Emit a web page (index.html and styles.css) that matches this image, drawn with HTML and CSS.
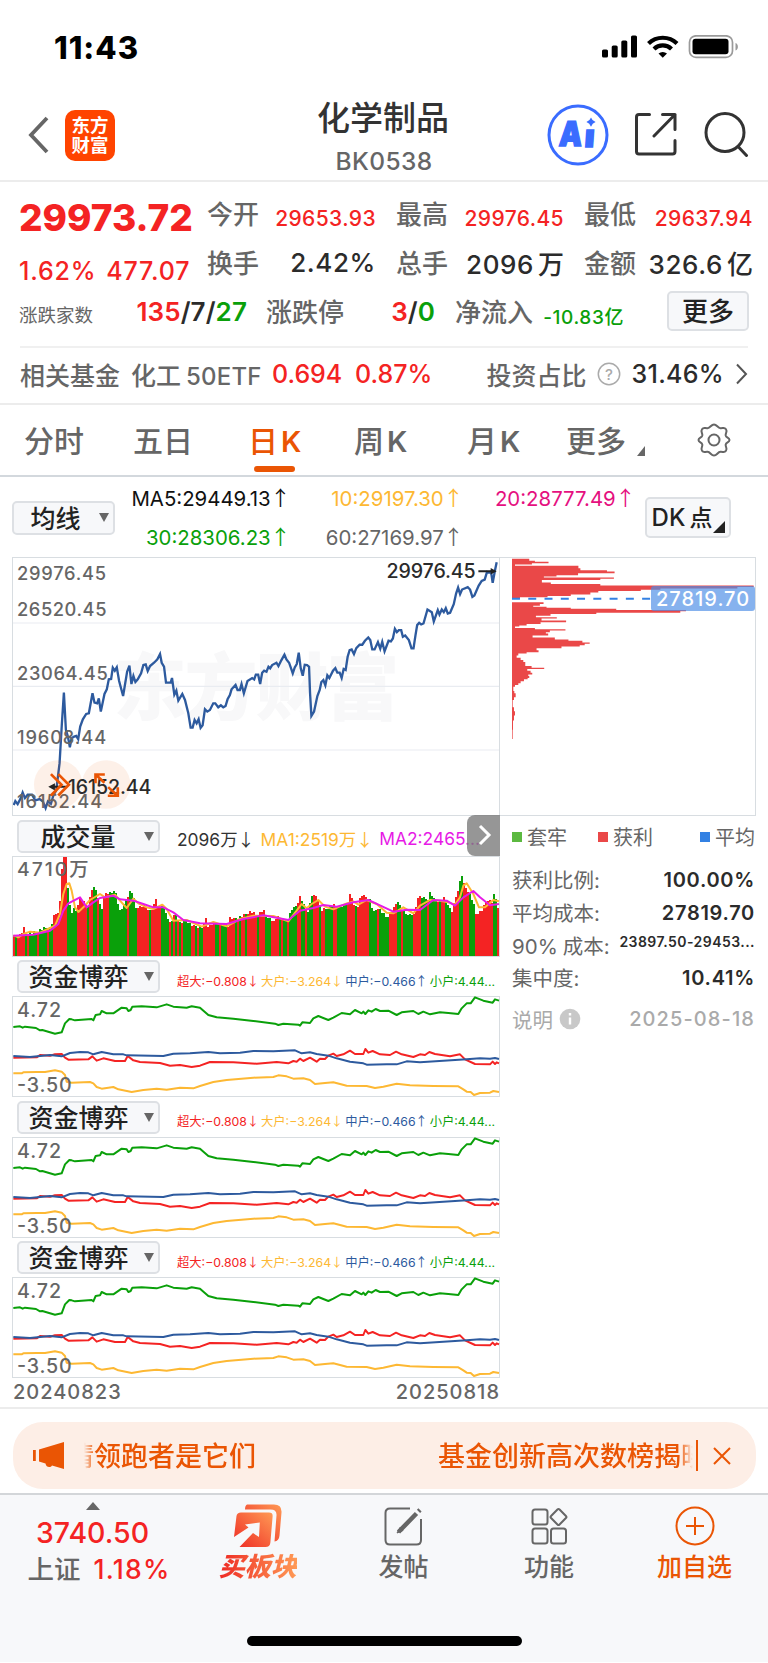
FILE: index.html
```html
<!DOCTYPE html>
<html lang="zh-CN">
<head>
    <meta charset="UTF-8">
    <meta name="viewport" content="width=device-width, initial-scale=1.0">
    <title>化学制品 BK0538</title>
    <link rel="stylesheet" href="styles.css">
</head>
<body>
    <div class="status-bar">
        <span class="clock">11:43</span>
        <svg class="status-icons" width="138" height="24" viewBox="0 0 138 24">
            <rect x="0" y="14.5" width="6" height="8" rx="1.6"/>
            <rect x="9.7" y="10.5" width="6" height="12" rx="1.6"/>
            <rect x="19.3" y="5.5" width="6" height="17" rx="1.6"/>
            <rect x="29" y="0.5" width="6" height="22" rx="1.6"/>
            <g fill="none" stroke="#000" stroke-width="4.2">
                <path d="M46.5 8.5a20.5 20.5 0 0 1 28.5 0"/>
                <path d="M52 14a12.5 12.5 0 0 1 17.5 0"/>
            </g>
            <path d="M56.5 18.5a6.5 6.5 0 0 1 8.5 0l-4.25 4.2z"/>
            <rect x="87.5" y="0.8" width="43" height="21.6" rx="6.5" fill="none" stroke="#9a9a9a" stroke-width="1.7"/>
            <rect x="90.5" y="3.8" width="36" height="15.5" rx="3"/>
            <path d="M133.5 8c3.2 1 3.2 6.5 0 7.5z" fill="#9a9a9a"/>
        </svg>
    </div>

    <header class="header">
        <div class="header-left">
            <svg width="22" height="38" viewBox="0 0 22 38"><path d="M19 2 3 19l16 17" fill="none" stroke="#666" stroke-width="3.8"/></svg>
            <div class="logo">东方<br>财富</div>
        </div>
        <div class="title">
            <h1>化学制品</h1>
            <p>BK0538</p>
        </div>
        <div class="header-right">
            <svg class="ai" width="62" height="62" viewBox="0 0 62 62">
                <circle cx="31" cy="31" r="29" fill="none" stroke="#3a6cff" stroke-width="3"/>
                <g transform="skewX(-4)" fill="#3a6cff" stroke="#3a6cff" stroke-width="1.5">
                    <text x="14.5" y="42" font-size="34" textLength="23" lengthAdjust="spacingAndGlyphs">A</text>
                    <text x="40" y="43" font-size="31" textLength="10" lengthAdjust="spacingAndGlyphs">ı</text>
                </g>
                <path d="M44 13.5q1.2 3.4 4.6 4.6-3.4 1.2-4.6 4.6-1.2-3.4-4.6-4.6 3.4-1.2 4.6-4.6z" fill="#3a6cff"/>
            </svg>
            <svg class="share" width="44" height="46" viewBox="0 0 44 46" fill="none" stroke="#333" stroke-width="3" stroke-linecap="round" stroke-linejoin="round">
                <path d="M16.5 3.5H6Q3.5 3.5 3.5 6v34.5Q3.5 43 6 43h33.5q2.5 0 2.5-2.5V29.5"/>
                <path d="M29.5 3.5H42v15M42 3.5 21 25"/>
            </svg>
            <svg class="search" width="46" height="46" viewBox="0 0 46 46" fill="none" stroke="#333" stroke-width="3" stroke-linecap="round">
                <circle cx="22" cy="21.5" r="19"/>
                <path d="m35.5 36 8 8.5"/>
            </svg>
        </div>
    </header>

    <section class="quote">
        <div class="quote-top">
            <div class="price-box">
                <div class="price">29973.72</div>
                <div class="change"><span>1.62%</span><span>477.07</span></div>
            </div>
            <div class="stats">
                <div class="stat"><label>今开</label><span class="red small">29653.93</span></div>
                <div class="stat"><label>最高</label><span class="red small">29976.45</span></div>
                <div class="stat"><label>最低</label><span class="red small">29637.94</span></div>
                <div class="stat"><label>换手</label><span>2.42%</span></div>
                <div class="stat"><label>总手</label><span>2096<i>万</i></span></div>
                <div class="stat"><label>金额</label><span>326.6<i>亿</i></span></div>
            </div>
        </div>
        <div class="quote-more">
            <div class="stat updown"><label>涨跌家数</label><span><b class="red">135</b>/7/<b class="green">27</b></span></div>
            <div class="stat limit"><label>涨跌停</label><span><b class="red">3</b>/<b class="green">0</b></span></div>
            <div class="stat inflow"><label>净流入</label><span class="green">-10.83亿</span></div>
            <button class="more">更多</button>
        </div>
        <div class="fund">
            <span class="fund-label">相关基金</span>
            <span class="fund-name">化工<i>50ETF</i></span>
            <span class="red fund-price">0.694</span>
            <span class="red fund-pct">0.87%</span>
            <span class="ratio-label">投资占比</span>
            <svg class="help" width="24" height="24" viewBox="0 0 24 24"><circle cx="12" cy="12" r="10.7" fill="none" stroke="#aaa" stroke-width="1.5"/><text x="12" y="17.5" font-size="15" text-anchor="middle" fill="#aaa">?</text></svg>
            <span class="ratio">31.46%</span>
            <svg class="arrow" width="13" height="22" viewBox="0 0 13 22"><path d="m2 1.5 9 9.5-9 9.5" fill="none" stroke="#555" stroke-width="2"/></svg>
        </div>
    </section>

    <nav class="tabs">
        <span class="tab">分时</span>
        <span class="tab">五日</span>
        <span class="tab active">日<i>K</i></span>
        <span class="tab">周<i>K</i></span>
        <span class="tab">月<i>K</i></span>
        <span class="tab"><span class="has-more">更多</span></span>
        <svg class="gear" width="36" height="36" viewBox="0 0 36 36" fill="none" stroke="#666" stroke-width="2">
            <circle cx="18" cy="18" r="5.5"/>
            <path d="M18 2.5c3 0 3.5 3.5 6.5 3.7 2.5.2 4-1.2 5.5 1 1.7 2.5-.8 3.8-.3 6.3.5 2.2 3.8 2 3.8 4.5s-3.3 2.3-3.8 4.5c-.5 2.5 2 3.8.3 6.3-1.5 2.2-3 .8-5.5 1-3 .2-3.5 3.7-6.5 3.7s-3.5-3.5-6.5-3.7c-2.5-.2-4 1.2-5.5-1-1.7-2.5.8-3.8.3-6.3C5.8 20.3 2.5 20.5 2.5 18s3.3-2.3 3.8-4.5C6.8 11 4.3 9.7 6 7.2c1.5-2.2 3-.8 5.5-1C14.5 6 15 2.5 18 2.5z"/>
        </svg>
    </nav>

    <div class="ma-row">
        <button class="select ma-select">均线</button>
        <div class="ma-values">
            <span class="c-black">MA5:29449.13<i class="ar">↑</i></span>
            <span class="c-yellow">10:29197.30<i class="ar">↑</i></span>
            <span class="c-pink">20:28777.49<i class="ar">↑</i></span>
            <span class="c-green">30:28306.23<i class="ar">↑</i></span>
            <span class="c-gray">60:27169.97<i class="ar">↑</i></span>
        </div>
        <button class="dk">DK<i>点</i></button>
    </div>

    <div class="main-chart">
        <svg class="price-chart" width="487" height="258" viewBox="38 24 1461 774">
            <text class="watermark" x="340" y="492" textLength="860">东方财富</text>
            <path d="M38 218.5H1499M38 409H1499M38 600.5H1499" stroke="#e9ecf1" stroke-width="3.5"/>
            <polyline class="price-line" points="40,766 45,754 52,763 60,748 67,728 74,745 82,735 95,735 105,752 118,748 128,755 136,775 143,755 152,762 160,735 168,722 178,640 185,520 191,428 197,540 203,560 209,592 214,565 222,560 228,558 234,568 240,530 248,508 258,492 266,490 277,430 283,458 291,460 296,445 302,485 313,432 320,418 326,388 333,387 338,353 344,362 350,352 357,393 369,438 381,365 388,347 394,402 400,378 406,396 413,388 423,370 430,345 437,343 443,363 450,348 462,338 472,328 480,312 485,338 492,350 498,398 512,398 516,384 523,434 529,422 535,452 547,432 555,450 565,490 572,533 578,533 584,510 590,520 596,508 602,534 608,526 615,478 622,485 630,480 640,460 646,460 655,472 663,466 670,472 677,468 683,448 690,435 695,418 707,405 713,420 720,420 725,402 732,430 743,393 757,384 763,388 768,374 775,374 781,402 787,368 793,362 800,365 806,350 811,355 817,345 830,338 836,348 845,330 854,314 860,328 868,338 879,370 885,352 891,342 897,308 903,355 909,377 915,344 922,345 928,350 931,430 935,498 943,485 953,438 960,420 965,396 971,390 977,406 983,376 989,384 1000,362 1007,354 1013,368 1020,368 1026,384 1032,357 1038,360 1044,320 1050,300 1056,298 1063,312 1070,294 1080,284 1088,284 1096,272 1106,262 1112,270 1118,298 1125,298 1135,276 1142,296 1148,275 1155,304 1167,272 1174,274 1180,265 1186,236 1192,246 1198,240 1205,240 1210,260 1217,256 1228,270 1236,295 1242,295 1248,255 1253,225 1259,218 1265,223 1272,220 1284,178 1297,186 1303,214 1315,180 1320,193 1327,178 1333,186 1339,174 1345,190 1352,188 1363,162 1370,130 1376,112 1382,132 1388,118 1405,111 1412,118 1419,140 1425,136 1438,106 1447,92 1456,88 1463,65 1470,67 1475,64 1480,98 1487,60 1492,36"/>
            <g class="axis-text">
                <text x="50" y="90" textLength="268">29976.45</text>
                <text x="50" y="197" textLength="269">26520.45</text>
                <text x="50" y="389" textLength="273">23064.45</text>
                <text x="50" y="581" textLength="268">19608.44</text>
                <text x="50" y="774" textLength="256">16152.44</text>
            </g>
            <circle cx="174" cy="704" r="73" fill="#ea5504" fill-opacity=".09"/>
            <circle cx="318" cy="704" r="73" fill="#ea5504" fill-opacity=".09"/>
            <g class="mark-text">
                <text x="1161" y="84" textLength="268">29976.45</text>
                <text x="203" y="732" textLength="251">16152.44</text>
            </g>
            <path d="M1437 63h45M160 711h40" stroke="#222" stroke-width="6"/>
            <path d="m1492 63-18-10v20zM144 711l20-11v22z" fill="#222"/>
            <g fill="none" stroke="#ea5504" stroke-width="8">
                <path d="m152 673 32 32-32 32M174 673l32 32-32 32"/>
                <path d="M286 700v-26h28M287 675l26 24M353 712v26h-30M352 737l-28-25"/>
            </g>
        </svg>
        <svg id="chips" class="chip-chart" width="244" height="258" viewBox="36 24 732 774"></svg>
        <span class="avg-tag">27819.70</span>
    </div>

    <div class="board">
        <div class="charts">
            <div class="sub-head volume-head">
                <button class="select wide">成交量</button>
                <span class="c-dark">2096万<i class="ar">↓</i></span>
                <span class="c-yellow">MA1:2519万<i class="ar">↓</i></span>
                <span class="c-magenta">MA2:2465...</span>
                <div class="slide"><svg width="14" height="22" viewBox="0 0 14 22"><path d="m2 2 9 9-9 9" fill="none" stroke="#fff" stroke-width="3"/></svg></div>
            </div>
            <svg id="volume" class="sub-chart" width="488" height="101" viewBox="36 136 1464 303"></svg>

            <div class="sub-head">
                <button class="select wide">资金博弈</button>
                <div class="flows">
                    <span class="red">超大:−0.808<i class="ar">↓</i></span>
                    <span class="c-yellow">大户:−3.264<i class="ar">↓</i></span>
                    <span class="c-blue">中户:−0.466<i class="ar">↑</i></span>
                    <span class="green">小户:4.44...</span>
                </div>
            </div>
            <svg class="sub-chart" width="488" height="101" viewBox="36 123 1464 303">
                <g id="flow">
                    <rect x="37.5" y="124.5" width="1461" height="300" fill="none" stroke="#d8dde1" stroke-width="3"/>
                    <g class="flow-line">
                        <polyline stroke="#fdb833" points="40,355 65,355 70,352 110,351 135,351 165,346 185,350 195,360 200,380 215,383 270,381 280,385 290,396 305,401 340,396 355,403 395,411 430,405 470,401 500,404 540,398 580,400 600,393 640,381 680,375 760,368 820,366 835,361 860,364 880,371 910,370 930,375 945,387 975,384 1000,382 1040,392 1100,393 1125,399 1150,395 1190,386 1230,391 1300,393 1375,394 1390,403 1400,410 1412,411 1422,420 1440,414 1470,413 1480,408 1497,411"/>
                        <polyline stroke="#f42323" points="40,308 110,307 120,300 150,302 165,298 185,297 195,308 205,314 265,313 277,304 290,317 310,310 345,318 375,318 383,303 400,316 420,321 480,324 510,332 540,330 575,336 600,332 630,321 700,322 770,326 830,321 865,325 880,318 890,320 900,311 910,318 930,308 950,320 960,311 975,312 985,302 1000,296 1010,303 1030,298 1050,287 1065,297 1090,297 1096,282 1105,293 1118,288 1140,298 1170,300 1188,290 1205,298 1240,306 1260,298 1275,300 1288,291 1305,297 1350,304 1380,298 1395,313 1425,327 1470,328 1478,320 1485,327 1490,322 1497,325"/>
                        <polyline stroke="#2d5a9e" points="40,303 90,306 120,303 150,300 185,304 210,294 240,291 265,292 280,298 305,291 340,298 370,298 380,301 490,303 520,296 570,295 625,291 660,295 720,293 760,288 820,289 885,286 905,295 930,292 950,297 985,302 1010,310 1050,320 1090,325 1100,329 1160,328 1190,328 1220,319 1260,322 1330,317 1400,313 1440,310 1470,311 1485,309 1497,312"/>
                        <polyline stroke="#0aa00a" points="40,216 60,214 68,218 75,215 108,219 120,226 127,225 165,236 185,232 195,205 208,192 215,193 225,196 275,192 280,196 287,180 300,178 305,168 320,175 340,175 365,158 380,160 385,168 392,165 397,155 425,154 470,157 500,148 520,155 560,158 575,154 600,158 625,180 650,187 700,191 760,198 825,206 835,210 850,206 895,209 900,212 907,202 930,204 940,190 955,183 985,195 1000,188 1025,174 1050,178 1065,165 1085,175 1090,170 1096,177 1105,166 1115,170 1127,162 1140,168 1165,167 1190,180 1205,172 1240,168 1255,177 1270,170 1290,178 1320,172 1345,174 1375,177 1385,160 1400,145 1412,145 1425,127 1450,137 1478,143 1485,133 1497,137"/>
                    </g>
                    <g class="flow-text">
                        <text x="51" y="185" textLength="132">4.72</text>
                        <text x="51" y="410" textLength="164">-3.50</text>
                    </g>
                </g>
            </svg>

            <div class="sub-head">
                <button class="select wide">资金博弈</button>
                <div class="flows">
                    <span class="red">超大:−0.808<i class="ar">↓</i></span>
                    <span class="c-yellow">大户:−3.264<i class="ar">↓</i></span>
                    <span class="c-blue">中户:−0.466<i class="ar">↑</i></span>
                    <span class="green">小户:4.44...</span>
                </div>
            </div>
            <svg class="sub-chart" width="488" height="101" viewBox="36 123 1464 303"><use href="#flow"/></svg>

            <div class="sub-head">
                <button class="select wide">资金博弈</button>
                <div class="flows">
                    <span class="red">超大:−0.808<i class="ar">↓</i></span>
                    <span class="c-yellow">大户:−3.264<i class="ar">↓</i></span>
                    <span class="c-blue">中户:−0.466<i class="ar">↑</i></span>
                    <span class="green">小户:4.44...</span>
                </div>
            </div>
            <svg class="sub-chart" width="488" height="101" viewBox="36 123 1464 303"><use href="#flow"/></svg>

            <div class="dates"><span>20240823</span><span>20250818</span></div>
        </div>

        <aside class="chip-info">
            <div class="legend">
                <span class="lg-green">套牢</span>
                <span class="lg-red">获利</span>
                <span class="lg-blue">平均</span>
            </div>
            <div class="info-row"><label>获利比例:</label><b>100.00%</b></div>
            <div class="info-row"><label>平均成本:</label><b>27819.70</b></div>
            <div class="info-row"><label>90%<i>成本:</i></label><b class="range">23897.50-29453...</b></div>
            <div class="info-row"><label>集中度:</label><b>10.41%</b></div>
            <div class="info-row note">
                <label>说明</label>
                <svg width="22" height="22" viewBox="0 0 22 22"><circle cx="11" cy="11" r="10.3" fill="#c8c8c8"/><path d="M11 5v2.5M11 9.5v7" stroke="#fff" stroke-width="2.4"/></svg>
                <span>2025-08-18</span>
            </div>
        </aside>
    </div>

    <div class="banner-wrap">
        <div class="banner">
            <svg width="34" height="30" viewBox="0 0 34 30" fill="#ea5504"><path d="M1 9h2.8v11H1zM7 8.500 32 1v27l-12-3.500c-1.500 2.500-6 2-6.500-2L7 20.500z"/></svg>
            <div class="marquee"><span>情领跑者是它们</span><span>基金创新高次数榜揭晓</span></div>
            <div class="close"><svg width="18" height="18" viewBox="0 0 18 18"><path d="m1 1 16 16M17 1 1 17" fill="none" stroke="#ea5504" stroke-width="2"/></svg></div>
        </div>
    </div>

    <footer class="bottom-nav">
        <div class="index">
            <div class="caret"></div>
            <div class="index-value">3740.50</div>
            <div class="index-name">上证<span>1.18%</span></div>
        </div>
        <div class="nav-item buy">
            <svg width="50" height="44" viewBox="0 0 50 44">
                <defs>
                    <linearGradient id="hot" x1="0" y1="1" x2="1" y2="0">
                        <stop offset="0" stop-color="#ee2a24"/>
                        <stop offset="1" stop-color="#ff9a55"/>
                    </linearGradient>
                </defs>
                <path d="M14 .5h27q8 0 7.5 8l-2 23q-.5 5.5-5 6l2-26q.5-6-6-6H12q0-4 2-5z" fill="url(#hot)"/>
                <path d="M8 8.500h28q4 0 3.600 4l-2.200 26q-.4 4.500-5 4.500H6.500L20 29l6 4 .8-14.500L12 20.500l3.500 3L1 33 3.500 12q.5-3.500 4.500-3.500z" fill="url(#hot)"/>
            </svg>
            <span>买板块</span>
        </div>
        <div class="nav-item">
            <svg width="40" height="40" viewBox="0 0 40 40" fill="none" stroke="#666" stroke-width="2">
                <path d="M27 2.5H7Q2.5 2.5 2.5 7v27q0 4.5 4.5 4.5h26.5Q38 38.5 38 34V13"/>
                <path d="m33.5 7.500-18 18.500M37 3.800l-1.500 1.500" stroke-width="4.5"/>
                <path d="m17 21.5 3 3-6 2.500z" fill="#666" stroke-width="1"/>
            </svg>
            <span>发帖</span>
        </div>
        <div class="nav-item">
            <svg width="40" height="40" viewBox="0 0 40 40" fill="none" stroke="#666" stroke-width="2">
                <rect x="3.5" y="3.5" width="15" height="15" rx="2.5"/>
                <rect x="3.5" y="22.5" width="15" height="15" rx="2.5"/>
                <rect x="22" y="22.5" width="15" height="15" rx="2.5"/>
                <rect x="23.5" y="5" width="12" height="12" rx="1.5" transform="rotate(45 29.5 11)"/>
            </svg>
            <span>功能</span>
        </div>
        <div class="nav-item add">
            <svg width="40" height="40" viewBox="0 0 40 40" fill="none" stroke="#ea5504" stroke-width="2">
                <circle cx="20" cy="20" r="18.5"/>
                <path d="M20 11v18M11 20h18"/>
            </svg>
            <span>加自选</span>
        </div>
        <div class="home-bar"></div>
    </footer>

    <script src="charts.js"></script>
</body>
</html>
```
FILE: styles.css
```css
* {
    box-sizing: border-box;
}
body {
    margin: 0;
    width: 768px;
    background: #fff;
    color: #2b2b2b;
    font-family: Inter, "Noto Sans CJK SC", sans-serif;
    font-weight: 500;
}
svg {
    display: block;
    flex: none;
}
i {
    font-style: normal;
}
button {
    font: inherit;
    color: #222;
    padding: 0;
    background: #f7f8fa;
    border: 2px solid #dde0e4;
    border-radius: 5px;
    white-space: nowrap;
}
span, label, b {
    white-space: nowrap;
}
.red { color: #f42323; }
.green { color: #0aa00a; }
.c-black { color: #111; }
.c-dark { color: #333; }
.c-yellow { color: #fdb833; }
.c-pink { color: #e5107f; }
.c-magenta { color: #e61ae6; }
.c-green { color: #0aa00a; }
.c-gray { color: #666; }
.c-blue { color: #2d5a9e; }
.ar {
    font-family: "Noto Sans CJK SC", sans-serif;
    display: inline-block;
    width: .55em;
    margin-left: .2em;
    text-indent: -.22em;
}

/* status bar */
.status-bar {
    height: 94px;
    padding: 0 28px 0 54px;
    display: flex;
    align-items: center;
    justify-content: space-between;
    color: #000;
}
.clock {
    font-size: 31px;
    font-weight: 800;
    letter-spacing: 1px;
}

/* header */
.header {
    height: 88px;
    display: grid;
    grid-template-columns: 1fr auto 1fr;
    border-bottom: 2px solid #ececec;
}
.header-left {
    display: flex;
    align-items: center;
    padding: 0 0 4px 28px;
    gap: 15px;
}
.logo {
    width: 50px;
    height: 51px;
    padding-top: 5px;
    border-radius: 10px;
    background: #ff4400;
    color: #fff;
    font-size: 18.5px;
    font-weight: 700;
    line-height: 20px;
    text-align: center;
}
.title {
    text-align: center;
}
.title h1 {
    margin: 4px 2px 0 0;
    font-size: 33px;
    font-weight: 500;
    line-height: 40px;
    color: #333;
}
.title p {
    margin: 8px 0 0;
    font-size: 24.5px;
    line-height: 30px;
    letter-spacing: .4px;
    color: #666;
}
.header-right {
    display: flex;
    align-items: flex-start;
    justify-content: flex-end;
    padding: 10px 19px 0 0;
}
.ai {
    margin: 0 24px 0 0;
    font-weight: 900;
}
.share {
    margin: 7px 26px 0 0;
}
.search {
    margin-top: 7px;
}

/* quote */
.quote {
    height: 223px;
    padding: 8px 0 0 20px;
    border-bottom: 2px solid #ececec;
}
.quote-top {
    display: flex;
    height: 98px;
}
.price-box {
    width: 188px;
    color: #f42323;
}
.price {
    margin: 5px 0 0 -1px;
    font-size: 37px;
    font-weight: 800;
    line-height: 46px;
}
.change {
    display: flex;
    gap: 10px;
    margin: 13px 0 0 -1px;
    font-size: 25px;
    line-height: 34px;
    letter-spacing: .8px;
}
.stats {
    display: grid;
    grid-template-columns: 168px 167px 168px;
    grid-template-rows: 49px 49px;
    column-gap: 21px;
}
.stat {
    display: flex;
    align-items: center;
    justify-content: space-between;
    padding-bottom: 2px;
    font-size: 26px;
    letter-spacing: .6px;
}
.stat label {
    padding-bottom: 3px;
    margin-left: -1px;
    color: #666;
    letter-spacing: 0;
}
.stat i {
    margin-left: 4px;
    letter-spacing: 0;
}
.stat .small {
    padding-top: 9px;
    font-size: 21px;
    letter-spacing: .4px;
}
.quote-more {
    height: 49px;
    display: flex;
    align-items: center;
}
.updown {
    width: 227px;
    margin-right: 20px;
}
.updown label {
    padding-top: 7px;
    font-size: 18.5px;
    font-weight: 400;
}
.updown span, .limit span {
    font-weight: 600;
    letter-spacing: .1px;
}
.stat b {
    font-weight: 600;
}
.limit {
    width: 168px;
    margin-right: 21px;
}
.inflow {
    width: 168px;
    margin-right: 43px;
}
.inflow span {
    padding-top: 8px;
    font-size: 19px;
    letter-spacing: .6px;
}
.more {
    width: 82px;
    height: 40px;
    margin-bottom: 3px;
    font-size: 26px;
    line-height: 35px;
}
.fund {
    display: flex;
    align-items: center;
    width: 728px;
    height: 57px;
    margin-top: 9px;
    padding-bottom: 3px;
    border-top: 2px solid #f0f0f0;
    font-size: 25px;
    color: #666;
}
.fund .red {
    color: #f42323;
}
.fund-label {
    width: 111px;
}
.fund-name {
    width: 141px;
}
.fund-name i {
    margin-left: 5px;
    font-size: 24px;
    letter-spacing: .2px;
}
.fund-price {
    width: 83px;
}
.ratio-label {
    margin-left: auto;
}
.help {
    margin: 0 11px 0 10px;
}
.ratio {
    color: #2b2b2b;
    letter-spacing: .3px;
}
.arrow {
    margin-left: 11px;
}

/* tabs */
.tabs {
    height: 72px;
    padding: 0 0 3px 24px;
    display: grid;
    grid-template-columns: 109px 115px 106px 113px 99px 130px auto;
    align-items: center;
    border-bottom: 2px solid #d3d8dd;
    font-size: 30px;
    color: #666;
}
.gear {
    margin-top: 3px;
}
.tab {
    position: relative;
}
.tab i {
    margin-left: 3px;
    font-size: 29px;
    font-weight: 600;
}
.active {
    color: #ea5504;
}
.active::after {
    content: "";
    position: absolute;
    left: 6px;
    bottom: -11px;
    width: 41px;
    height: 6px;
    border-radius: 3px;
    background: #ea5504;
}
.has-more {
    position: relative;
}
.has-more::after {
    content: "";
    position: absolute;
    right: -19px;
    bottom: 3px;
    border-left: 8px solid transparent;
    border-bottom: 10px solid #666;
}

/* moving averages */
.ma-row {
    height: 80px;
    padding: 0 37px 2px 12px;
    display: flex;
    align-items: center;
}
.select {
    position: relative;
    flex: none;
    display: block;
    width: 103px;
    height: 34px;
    padding: 0 20px 0 4px;
    font-size: 25px;
    line-height: 32px;
}
.ma-select {
    margin-top: 3px;
}
.select::after {
    content: "";
    position: absolute;
    right: 4px;
    top: 10px;
    border: 5.5px solid transparent;
    border-top: 9px solid #666;
    border-bottom: 0;
}
.ma-values {
    display: grid;
    grid-template-columns: 171px 173px 172px;
    grid-template-rows: 39px 39px;
    align-items: center;
    justify-items: end;
    font-size: 20.4px;
    font-weight: 400;
}
.dk {
    position: relative;
    width: 86px;
    height: 41px;
    margin: 2px 0 0 14px;
    padding-right: 12px;
    font-size: 24px;
    line-height: 38px;
}
.dk i {
    margin-left: 4px;
    font-size: 23px;
}
.dk::after {
    content: "";
    position: absolute;
    right: 4px;
    bottom: 3px;
    border-left: 12px solid transparent;
    border-bottom: 12px solid #222;
}

/* price chart */
.main-chart {
    position: relative;
    display: flex;
    height: 259px;
    width: 744px;
    margin-left: 12px;
    border: 1px solid #d8dde1;
}
.price-chart {
    width: 487px;
    border-right: 1px solid #d8dde1;
    overflow: hidden;
}
.chip-chart {
    width: 243px;
    margin-left: 12px;
}
.watermark {
    font-size: 220px;
    font-weight: 900;
    fill: #f8f8f9;
}
.price-line {
    fill: none;
    stroke: #2d5a9e;
    stroke-width: 7;
}
.axis-text {
    font-size: 55px;
    fill: #666;
}
.mark-text {
    font-size: 59px;
    fill: #2b2b2b;
}
.avg-tag {
    position: absolute;
    right: 0;
    top: 28px;
    width: 104px;
    height: 25px;
    padding-left: 5px;
    border-radius: 3px;
    background: rgba(76, 142, 230, .68);
    color: #fff;
    font-size: 20px;
    line-height: 26px;
    letter-spacing: 1px;
}

/* sub charts */
.board {
    display: flex;
    height: 593px;
    border-bottom: 2px solid #ececec;
}
.charts {
    width: 500px;
    padding-left: 12px;
}
.sub-chart {
    height: 101px;
}
.sub-head {
    position: relative;
    display: flex;
    align-items: center;
    height: 39.5px;
    padding: 1px 0 0 5px;
}
.wide {
    width: 143px;
    height: 33px;
    padding: 0 20px 0 0;
    line-height: 30px;
}
.wide::after {
    right: 4px;
}
.volume-head {
    font-size: 17.4px;
    font-weight: 400;
}
.volume-head .wide {
    font-weight: 500;
    padding-right: 21px;
}
.volume-head span {
    margin-left: 17px;
    padding-top: 4px;
}
.volume-head span + span {
    margin-left: 10px;
}
.slide {
    position: absolute;
    right: 0;
    top: -1px;
    width: 33px;
    height: 41px;
    padding: 9px 0 0 11px;
    border-radius: 8px 0 0 8px;
    background: rgba(120, 120, 120, .78);
}
.flows {
    display: flex;
    justify-content: space-between;
    width: 318px;
    margin-left: 17px;
    padding-top: 8px;
    font-size: 12.3px;
    font-weight: 400;
}
.flow-line {
    fill: none;
    stroke-width: 6;
    stroke-linejoin: round;
}
.flow-text {
    font-size: 59px;
    fill: #666;
}
.dates {
    display: flex;
    justify-content: space-between;
    padding: 1px 0 0 1px;
    font-size: 20px;
    line-height: 26px;
    letter-spacing: 1px;
    color: #666;
}

/* chip info */
.chip-info {
    width: 243px;
    margin-left: 12px;
    color: #666;
}
.legend {
    display: flex;
    justify-content: space-between;
    height: 42px;
    margin-bottom: 5px;
    font-size: 20px;
    font-weight: 400;
    line-height: 44px;
}
.legend span::before {
    content: "";
    display: inline-block;
    width: 10px;
    height: 10px;
    margin-right: 5px;
    vertical-align: 3px;
}
.lg-green::before { background: #5cb940; }
.lg-red::before { background: #ea4848; }
.lg-blue::before { background: #3381e3; }
.legend .lg-red {
    margin-right: 16px;
}
.info-row {
    display: flex;
    align-items: center;
    justify-content: space-between;
    height: 32.7px;
    font-size: 20.5px;
}
.info-row label {
    font-weight: 400;
}
.info-row label i {
    margin-left: 5px;
}
.info-row b {
    padding-top: 1px;
    color: #2b2b2b;
    font-weight: 600;
    font-size: 20px;
    letter-spacing: .7px;
}
.info-row .range {
    padding: 0 0 7px;
    font-size: 14px;
    letter-spacing: .45px;
}
.note {
    height: 49px;
    padding-top: 1px;
    justify-content: flex-start;
    color: #aaa;
}
.note svg {
    margin-left: 6px;
}
.note span {
    margin-left: auto;
    font-size: 20px;
    letter-spacing: 1.1px;
}

/* banner */
.banner-wrap {
    height: 86px;
    padding: 13px 12px 0 13px;
    border-bottom: 2px solid #d3d6d9;
}
.banner {
    display: flex;
    align-items: center;
    height: 67px;
    padding-left: 19px;
    border-radius: 30px;
    background: #fdeee6;
}
.marquee {
    display: flex;
    justify-content: space-between;
    width: 609px;
    margin-left: 18px;
    padding-top: 3px;
    overflow: hidden;
    color: #ea5504;
    font-size: 27px;
    line-height: 38px;
    -webkit-mask-image: linear-gradient(90deg, transparent, #000 11px, #000 595px, transparent);
    mask-image: linear-gradient(90deg, transparent, #000 11px, #000 595px, transparent);
}
.marquee span {
    margin: 0 -15px 0 -17px;
}
.close {
    height: 31px;
    margin-left: 3px;
    padding: 7px 0 0 15px;
    border-left: 2px solid #ea5504;
}

/* bottom nav */
.bottom-nav {
    position: relative;
    display: flex;
    height: 167px;
    background: #f7f8fa;
    color: #666;
}
.index {
    width: 185px;
    text-align: center;
}
.caret {
    width: 0;
    margin: 7px auto 0;
    border: 7.5px solid transparent;
    border-top: 0;
    border-bottom: 8px solid #666;
}
.index-value {
    margin-top: 3px;
    font-size: 28.5px;
    line-height: 40px;
    color: #f42323;
}
.index-name {
    margin: -1px 0 0 13px;
    font-size: 26.5px;
    line-height: 34px;
}
.index-name span {
    margin-left: 13px;
    letter-spacing: 1.3px;
    color: #f42323;
}
.nav-item {
    display: flex;
    flex-direction: column;
    align-items: center;
    width: 145.6px;
    padding-top: 11px;
    font-size: 25px;
}
.nav-item span {
    margin-top: 3px;
    line-height: 36px;
}
.buy {
    padding-top: 9px;
}
.buy svg {
    margin-bottom: -2px;
}
.buy span {
    font-size: 26px;
    font-weight: 900;
    font-style: italic;
    color: transparent;
    background: linear-gradient(90deg, #ee2a24, #ff9a55);
    -webkit-background-clip: text;
    background-clip: text;
}
.add {
    color: #ea5504;
}
.home-bar {
    position: absolute;
    left: 247px;
    bottom: 16px;
    width: 275px;
    height: 10px;
    border-radius: 5px;
    background: #000;
}
```
FILE: charts.js
```js
const NS = 'http://www.w3.org/2000/svg';

function add(parent, name, attrs) {
    const el = document.createElementNS(NS, name);
    for (const key in attrs) el.setAttribute(key, attrs[key]);
    parent.appendChild(el);
    return el;
}

// chip distribution: [top, right edge] of every step
const chips = [
    [25, 88], [31, 105], [34, 146], [38, 96], [42, 45], [46, 236], [53, 242], [59, 322], [63, 345], [68, 235],
    [74, 170], [78, 132], [81, 343], [85, 302], [89, 126], [96, 153], [101, 302], [105, 764], [110, 715], [114, 483], [118, 424],
    [122, 296], [126, 272], [132, 213], [137, 143], [141, 60], [145, 36], [156, 131], [161, 120], [166, 100],
    [169, 140], [172, 213], [175, 350], [179, 560], [183, 543], [187, 290], [191, 152], [196, 108], [201, 171],
    [205, 125], [211, 199], [216, 122], [221, 80], [226, 58], [229, 45], [233, 105], [237, 197], [241, 150],
    [246, 138], [250, 145], [256, 98], [262, 165], [268, 206], [272, 248], [277, 270], [281, 255], [285, 240], [289, 185],
    [294, 110], [300, 116], [306, 80], [310, 55], [316, 50], [323, 62], [330, 70], [336, 76], [348, 95], [353, 133],
    [357, 82], [362, 92], [368, 97], [373, 85], [378, 88], [384, 83], [388, 72], [394, 62], [400, 55], [405, 45],
    [410, 40], [423, 43], [430, 47], [442, 42], [450, 38], [472, 42], [484, 45], [497, 42], [512, 39], [540, 38], [568, 36]
];
const chipSvg = document.getElementById('chips');
let outline = 'M36 25';
for (let n = 0; n < chips.length - 1; n++) {
    outline += `H${chips[n][1]}V${chips[n + 1][0]}`;
}
add(chipSvg, 'path', { d: outline + 'H36z', fill: '#ea4848' });
add(chipSvg, 'path', { d: 'M36 145H454', stroke: '#3381e3', 'stroke-width': 6, 'stroke-dasharray': '24 25' });

// volume: envelope of the bars and the ranges that closed lower
const tops = [
    [40, 375], [65, 370], [70, 345], [77, 368], [100, 365], [120, 357], [145, 347], [152, 352], [160, 320],
    [175, 300], [180, 272], [185, 180], [190, 138], [199, 138], [202, 215], [207, 245], [212, 310], [220, 295],
    [230, 300], [237, 262], [250, 270], [262, 290], [268, 268], [275, 235], [285, 230], [292, 248], [305, 300],
    [310, 262], [318, 245], [350, 245], [357, 300], [370, 290], [380, 262], [390, 243], [400, 243], [405, 295],
    [415, 285], [440, 288], [450, 300], [460, 290], [469, 262], [477, 292], [488, 282], [500, 312], [512, 338],
    [525, 308], [540, 335], [560, 330], [580, 345], [610, 350], [617, 317], [624, 345], [650, 335], [684, 345],
    [691, 316], [700, 325], [720, 318], [750, 302], [770, 312], [790, 298], [800, 315], [825, 335], [832, 307],
    [840, 325], [865, 330], [872, 298], [890, 285], [899, 254], [907, 270], [915, 290], [927, 300], [933, 254],
    [948, 255], [955, 265], [965, 300], [1000, 282], [1020, 290], [1045, 275], [1053, 238], [1060, 285],
    [1075, 285], [1083, 252], [1110, 265], [1120, 305], [1135, 290], [1160, 320], [1180, 295], [1193, 268],
    [1202, 290], [1215, 308], [1245, 312], [1252, 258], [1265, 258], [1283, 265], [1292, 238], [1300, 265],
    [1322, 270], [1330, 258], [1345, 280], [1355, 305], [1370, 250], [1378, 220], [1385, 187], [1391, 220],
    [1405, 240], [1420, 275], [1428, 310], [1445, 300], [1462, 265], [1477, 275], [1483, 250], [1490, 270], [1497, 300]
];
const falls = [
    [48, 53], [76, 82], [85, 108], [120, 138], [150, 157], [200, 205], [207, 218], [222, 232], [262, 267],
    [280, 292], [297, 302], [305, 310], [330, 338], [341, 355], [357, 378], [388, 402], [408, 412], [445, 450],
    [484, 508], [512, 520], [524, 530], [540, 545], [550, 575], [583, 588], [600, 607], [643, 658], [661, 672],
    [678, 682], [705, 712], [720, 725], [735, 740], [770, 775], [795, 815], [838, 843], [850, 858], [868, 890],
    [903, 912], [921, 926], [930, 937], [955, 962], [974, 990], [995, 1000], [1013, 1038], [1065, 1070],
    [1110, 1130], [1140, 1158], [1163, 1168], [1190, 1200], [1207, 1212], [1216, 1240], [1265, 1280],
    [1287, 1310], [1318, 1323], [1337, 1355], [1380, 1390], [1405, 1425], [1480, 1490]
];

function topAt(x) {
    for (let n = 1; n < tops.length; n++) {
        if (x <= tops[n][0]) {
            const [x0, y0] = tops[n - 1];
            const [x1, y1] = tops[n];
            return y0 + (y1 - y0) * (x - x0) / (x1 - x0);
        }
    }
    return 300;
}

const volume = document.getElementById('volume');
add(volume, 'rect', { x: 37.5, y: 137.5, width: 1461, height: 300, fill: 'none', stroke: '#d8dde1', 'stroke-width': 3 });
const bars = add(volume, 'g', { 'shape-rendering': 'crispEdges' });
const step = 6;
for (let n = 0; n < 243; n++) {
    const x = 39 + n * step;
    const mid = x + step / 2;
    const y = Math.max(Math.min(topAt(mid) + (n * 7 % 5) * 2 - 3, 380), 138);
    const down = falls.some(([a, b]) => mid >= a && mid <= b);
    add(bars, 'rect', { x: x, y: y, width: step, height: 437 - y, fill: down ? '#0aa00a' : '#f42323' });
}
add(volume, 'polyline', {
    fill: 'none', stroke: '#fdb833', 'stroke-width': 6, 'stroke-linejoin': 'round',
    points: '40,374 55,380 70,370 90,363 120,366 150,352 165,345 180,310 190,250 200,220 208,218 215,240 225,290 235,304 250,290 270,268 300,250 315,260 345,252 360,270 380,292 400,264 415,278 440,290 460,295 487,282 500,295 520,330 560,328 605,348 640,334 680,347 720,325 760,315 820,316 865,332 890,300 905,280 920,293 935,280 955,268 975,288 1000,296 1040,278 1060,272 1075,282 1100,268 1130,280 1160,306 1180,308 1210,290 1240,308 1260,285 1290,268 1320,270 1345,275 1365,282 1380,260 1390,225 1400,218 1420,250 1437,290 1455,290 1480,268 1497,272'
});
add(volume, 'polyline', {
    fill: 'none', stroke: '#e61ae6', 'stroke-width': 6, 'stroke-linejoin': 'round',
    points: '40,375 100,372 150,360 175,340 190,300 205,278 240,260 260,290 280,275 300,262 340,255 360,266 400,270 430,280 460,290 490,290 520,305 550,328 600,338 680,340 730,325 790,314 865,328 900,300 940,292 970,283 1010,288 1060,275 1105,268 1140,284 1180,303 1220,297 1260,298 1300,268 1340,270 1365,285 1390,260 1420,241 1440,260 1470,284 1497,280'
});
const label = add(volume, 'text', { x: 51, y: 196, 'font-size': 58, fill: '#666', textLength: 215 });
label.textContent = '4710万';
```
